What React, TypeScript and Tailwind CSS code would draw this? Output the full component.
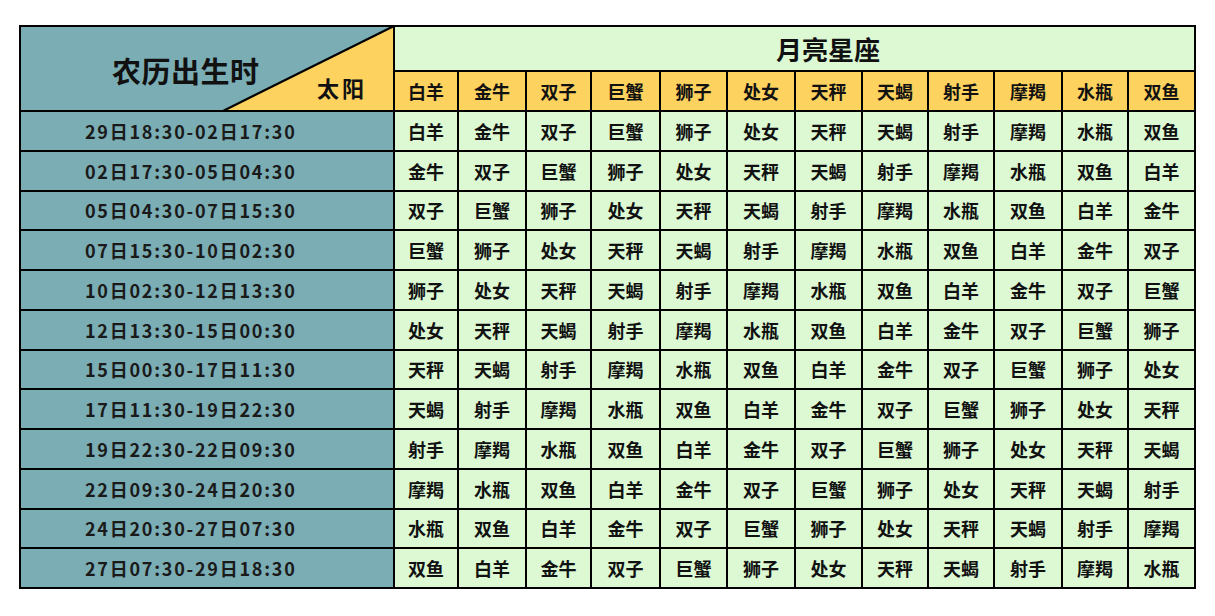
import React from "react";

const SIGNS = ["白羊", "金牛", "双子", "巨蟹", "狮子", "处女", "天秤", "天蝎", "射手", "摩羯", "水瓶", "双鱼"];
const LABELS = [
  "29日18:30-02日17:30",
  "02日17:30-05日04:30",
  "05日04:30-07日15:30",
  "07日15:30-10日02:30",
  "10日02:30-12日13:30",
  "12日13:30-15日00:30",
  "15日00:30-17日11:30",
  "17日11:30-19日22:30",
  "19日22:30-22日09:30",
  "22日09:30-24日20:30",
  "24日20:30-27日07:30",
  "27日07:30-29日18:30",
];

export default function App() {
  return (
    <div className="w-[1215px] h-[616px] bg-white overflow-hidden font-['Noto_Sans_CJK_SC',sans-serif] text-[#111]">
      <div className="mt-[25px] ml-[19px] w-fit bg-black p-[2px] grid gap-[2px] grid-cols-[372px_62px_66px_63px_67px_65px_66px_65px_64px_64px_66px_64px_65px] grid-rows-[43px_38px_repeat(12,37.75px)]">
        {/* corner header */}
        <div className="row-span-2 relative bg-[#7badb4] flex overflow-hidden">
          <svg className="absolute inset-0" width="372" height="83" viewBox="0 0 372 83">
            <polygon points="372,0 372,83 202,83" fill="#fdd25e" />
            <line x1="373" y1="-1" x2="202" y2="84" stroke="#000" strokeWidth="2.2" />
          </svg>
          <div className="relative ml-[91px] mt-[29px] self-start text-[29px] leading-none font-bold tracking-[0.5px] whitespace-nowrap">
            农历出生时
          </div>
          <div className="relative ml-auto mr-[26px] mb-[12px] self-end text-[22px] leading-none font-bold tracking-[3px] whitespace-nowrap">
            太阳
          </div>
        </div>
        {/* moon header */}
        <div className="col-span-12 bg-[#dcf9d4] flex items-center pl-[381px]">
          <span className="text-[26px] leading-none font-bold whitespace-nowrap">月亮星座</span>
        </div>
        {SIGNS.map((s) => (
          <div key={"h" + s} className="bg-[#fdd25e] flex items-center justify-center text-[18px] font-bold leading-none">
            {s}
          </div>
        ))}
        {LABELS.map((label, i) => (
          <React.Fragment key={label}>
            <div className="bg-[#7badb4] flex items-center pl-[64px] text-[18px] font-bold leading-none tracking-[1.75px] text-[#1a1a1a] whitespace-nowrap">
              {label}
            </div>
            {SIGNS.map((_, j) => (
              <div key={j} className="bg-[#dcf9d4] flex items-center justify-center text-[18px] font-bold leading-none">
                {SIGNS[(i + j) % 12]}
              </div>
            ))}
          </React.Fragment>
        ))}
      </div>
    </div>
  );
}
